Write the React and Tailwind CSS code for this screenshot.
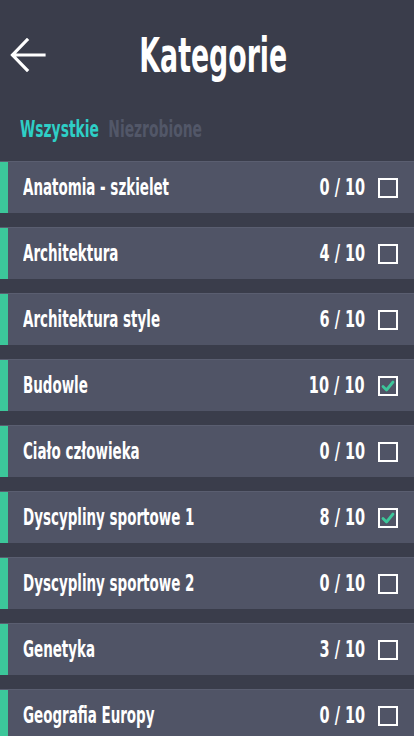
import React from "react";

const categories = [
  { name: "Anatomia - szkielet", done: 0 },
  { name: "Architektura", done: 4 },
  { name: "Architektura style", done: 6 },
  { name: "Budowle", done: 10, checked: true },
  { name: "Ciało człowieka", done: 0 },
  { name: "Dyscypliny sportowe 1", done: 8, checked: true },
  { name: "Dyscypliny sportowe 2", done: 0 },
  { name: "Genetyka", done: 3 },
  { name: "Geografia Europy", done: 0 },
];

// narrow, tall headline face: condensed sans squeezed horizontally
const font = { fontFamily: '"Liberation Sans Narrow", "DejaVu Sans Condensed", "Liberation Sans", sans-serif' };

const Checkbox = ({ checked }) => (
  <div className="w-5 h-5 shrink-0 border-2 border-white flex items-center justify-center">
    {checked && (
      <svg width="14" height="12" viewBox="0 0 14 12">
        <path d="M2 6.5 L5.5 10 L12 2" fill="none" stroke="#3cc79a" strokeWidth="2.8" strokeLinecap="round" strokeLinejoin="round" />
      </svg>
    )}
  </div>
);

const Row = ({ name, done, checked }) => (
  <div className="flex h-[52px] bg-[#505466] border-t border-[#5a5e70]">
    <div className="w-2 bg-[#3cc79a]" />
    <div className="flex-1 flex items-center pl-[15px] pr-4 overflow-hidden">
      <span className="flex-1 whitespace-nowrap text-white text-[23px] font-bold scale-x-[0.65] origin-left">{name}</span>
      <span className="whitespace-nowrap text-white text-[23px] font-bold mr-[13px] scale-x-[0.7] origin-right">{done} / 10</span>
      <Checkbox checked={checked} />
    </div>
  </div>
);

export default function App() {
  return (
    <div className="w-[414px] h-[736px] overflow-hidden bg-[#3a3d4b]" style={font}>
      <header className="relative flex items-center justify-center h-[110px]">
        <button className="absolute left-[10px] top-[38px]" aria-label="Wstecz">
          <svg width="36" height="34" viewBox="0 0 36 34">
            <path d="M34 17 H3 M17 2 L2.5 17 L17 32" fill="none" stroke="white" strokeWidth="3.2" strokeLinecap="square" />
          </svg>
        </button>
        <h1 className="text-white text-[48px] font-bold whitespace-nowrap scale-x-[0.62] ml-[12px]">Kategorie</h1>
      </header>
      <div className="pl-5 h-[40px] mt-[2px]">
        <div className="flex gap-[14px] text-[23px] font-bold whitespace-nowrap scale-x-[0.67] origin-left">
          <span className="text-[#2ecfc6]">Wszystkie</span>
          <span className="text-[#525768]">Niezrobione</span>
        </div>
      </div>
      <div className="flex flex-col gap-[14px] mt-[9px]">
        {categories.map((c) => (
          <Row key={c.name} {...c} />
        ))}
      </div>
    </div>
  );
}
